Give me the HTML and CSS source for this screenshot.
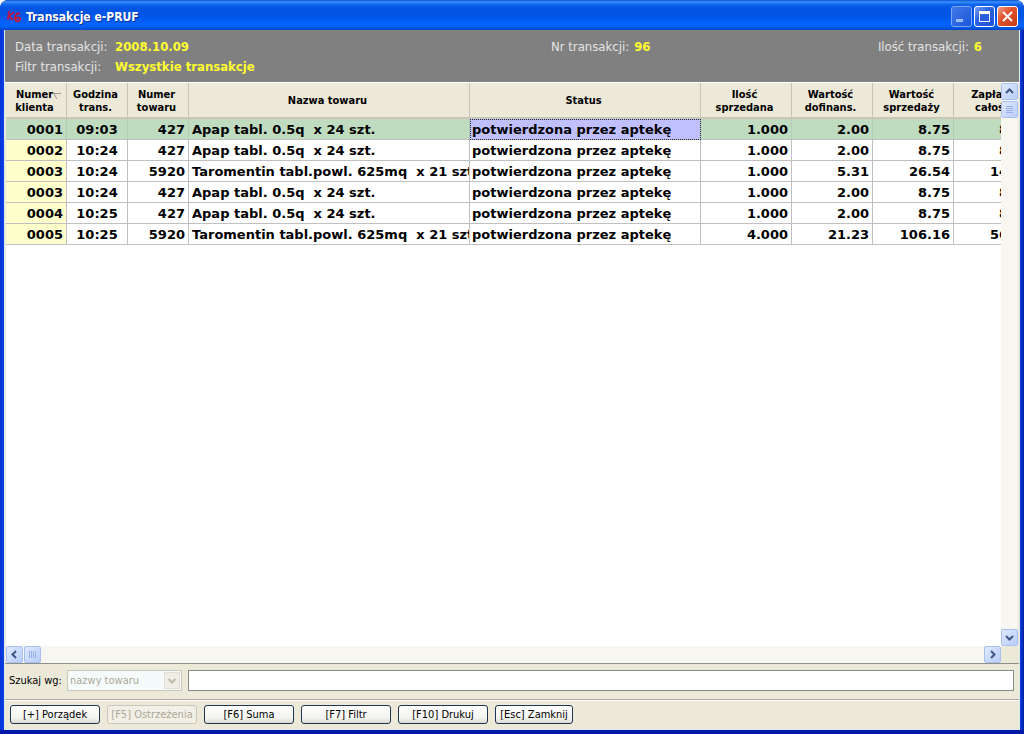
FILE: index.html
```html
<!DOCTYPE html>
<html lang="pl">
<head>
<meta charset="utf-8">
<meta name="viewport" content="width=device-width, initial-scale=1">
<title>Transakcje e-PRUF</title>
<link rel="stylesheet" href="styles.css">
</head>
<body>
<div class="window">
  <header class="titlebar">
    <svg class="app-icon" viewBox="0 0 16 16" aria-hidden="true">
      <path d="M3 2L2 11M8 3L3 7l4 4" fill="none" stroke="#b01c50" stroke-width="2"/>
      <path d="M14 5c-3-2-5 1-5 4 0 4 5 4 5 1 0-2-3-2-4 0" fill="none" stroke="#c4183c" stroke-width="2"/>
    </svg>
    <h1 class="title">Transakcje e-PRUF</h1>
    <div class="window-buttons">
      <button class="win-btn minimize" type="button" aria-label="Minimalizuj"><svg viewBox="0 0 19 19"><path d="M4 12h7v3H4z" fill="#9dbcf5"/></svg></button>
      <button class="win-btn" type="button" aria-label="Maksymalizuj"><svg viewBox="0 0 19 19"><path d="M4.500 5.500h10v9h-10z" fill="none" stroke="#fff"/><path d="M4 4h11v3H4z" fill="#fff"/></svg></button>
      <button class="win-btn close" type="button" aria-label="Zamknij"><svg viewBox="0 0 19 19"><path d="M5 5l9 9M14 5l-9 9" stroke="#fff" stroke-width="2"/></svg></button>
    </div>
  </header>

  <main class="client">
    <dl class="summary">
      <div class="fact fact-date"><dt>Data transakcji:</dt><dd>2008.10.09</dd></div>
      <div class="fact fact-number"><dt>Nr transakcji:</dt><dd>96</dd></div>
      <div class="fact fact-count"><dt>Ilość transakcji:</dt><dd>6</dd></div>
      <div class="fact fact-filter"><dt>Filtr transakcji:</dt><dd>Wszystkie transakcje</dd></div>
    </dl>

    <section class="grid-area">
      <div class="viewport">
        <table class="grid">
          <colgroup>
            <col class="c-client"><col class="c-time"><col class="c-item"><col class="c-name"><col class="c-status">
            <col class="c-qty"><col class="c-money"><col class="c-money"><col class="c-money">
          </colgroup>
          <thead>
            <tr>
              <th><span class="sorted">Numer<svg class="sort-mark" viewBox="0 0 8 8" aria-hidden="true"><path d="M0 1.500h8M1 2l3 5" fill="none" stroke="#9a978c"/></svg></span><br>klienta</th>
              <th>Godzina<br>trans.</th><th>Numer<br>towaru</th><th>Nazwa towaru</th><th>Status</th>
              <th>Ilość<br>sprzedana</th><th>Wartość<br>dofinans.</th><th>Wartość<br>sprzedaży</th><th>Zapłata<br>całość</th>
            </tr>
          </thead>
          <tbody>
            <tr class="current"><td>0001</td><td>09:03</td><td>427</td><td>Apap tabl. 0.5q&nbsp; x 24 szt.</td><td class="focused">potwierdzona przez aptekę</td><td>1.000</td><td>2.00</td><td>8.75</td><td>8.75</td></tr>
            <tr><td>0002</td><td>10:24</td><td>427</td><td>Apap tabl. 0.5q&nbsp; x 24 szt.</td><td>potwierdzona przez aptekę</td><td>1.000</td><td>2.00</td><td>8.75</td><td>8.75</td></tr>
            <tr><td>0003</td><td>10:24</td><td>5920</td><td>Taromentin tabl.powl. 625mq&nbsp; x 21 szt.</td><td>potwierdzona przez aptekę</td><td>1.000</td><td>5.31</td><td>26.54</td><td>14.23</td></tr>
            <tr><td>0003</td><td>10:24</td><td>427</td><td>Apap tabl. 0.5q&nbsp; x 24 szt.</td><td>potwierdzona przez aptekę</td><td>1.000</td><td>2.00</td><td>8.75</td><td>8.75</td></tr>
            <tr><td>0004</td><td>10:25</td><td>427</td><td>Apap tabl. 0.5q&nbsp; x 24 szt.</td><td>potwierdzona przez aptekę</td><td>1.000</td><td>2.00</td><td>8.75</td><td>8.75</td></tr>
            <tr><td>0005</td><td>10:25</td><td>5920</td><td>Taromentin tabl.powl. 625mq&nbsp; x 21 szt.</td><td>potwierdzona przez aptekę</td><td>4.000</td><td>21.23</td><td>106.16</td><td>56.92</td></tr>
          </tbody>
        </table>
      </div>
      <div class="scroll vertical">
        <button class="scroll-btn" type="button" aria-label="W górę"><svg viewBox="0 0 15 15"><path d="M4 9l3.500-3.500L11 9" fill="none" stroke="#405784" stroke-width="2"/></svg></button>
        <div class="thumb"><svg viewBox="0 0 15 15"><path d="M4 4.500h7M4 6.500h7M4 8.500h7M4 10.500h7" stroke="#95b0ec"/></svg></div>
        <button class="scroll-btn last" type="button" aria-label="W dół"><svg viewBox="0 0 15 15"><path d="M4 6l3.500 3.500L11 6" fill="none" stroke="#405784" stroke-width="2"/></svg></button>
      </div>
      <div class="scroll horizontal">
        <button class="scroll-btn" type="button" aria-label="W lewo"><svg viewBox="0 0 15 15"><path d="M9 4L5.500 7.500 9 11" fill="none" stroke="#405784" stroke-width="2"/></svg></button>
        <div class="thumb"><svg viewBox="0 0 15 15"><path d="M4.500 4v7M6.500 4v7M8.500 4v7M10.500 4v7" stroke="#95b0ec"/></svg></div>
        <button class="scroll-btn last" type="button" aria-label="W prawo"><svg viewBox="0 0 15 15"><path d="M6 4l3.500 3.500L6 11" fill="none" stroke="#405784" stroke-width="2"/></svg></button>
      </div>
    </section>

    <form class="search">
      <label for="field">Szukaj wg:</label>
      <span class="combo">
        <select id="field" disabled><option>nazwy towaru</option></select>
        <svg class="combo-arrow" viewBox="0 0 16 17" aria-hidden="true"><path d="M.5.5h15v16H.5z" fill="#f0ede6" stroke="#e2dfd4"/><path d="M4.500 7L8 10.500 11.500 7" fill="none" stroke="#bdb9a9" stroke-width="2"/></svg>
      </span>
      <input class="query" type="text" aria-label="Szukany tekst">
    </form>

    <div class="actions">
      <button class="action" type="button">[+] Porządek</button>
      <button class="action" type="button" disabled>[F5] Ostrzeżenia</button>
      <button class="action" type="button">[F6] Suma</button>
      <button class="action" type="button">[F7] Filtr</button>
      <button class="action" type="button">[F10] Drukuj</button>
      <button class="action narrow" type="button">[Esc] Zamknij</button>
    </div>
  </main>
</div>
</body>
</html>
```
FILE: styles.css
```css
* { box-sizing: border-box; }

body {
  margin: 0;
  background: #fff;
  color: #000;
  font: 11px/13px "DejaVu Sans Condensed", "Noto Sans", sans-serif;
}

button, input, select { font: inherit; }
svg { display: block; }

.window {
  display: flex;
  flex-direction: column;
  height: 100vh;
  padding: 0 4px 4px;
  border-radius: 8px 8px 0 0;
  background: linear-gradient(90deg, #0831d9, #0a3fe0 3px, #0a3fe0 calc(100% - 4px), #001ea0);
  box-shadow: inset 0 -4px 0 #0018a8;
  overflow: hidden;
}

/* Title bar */
.titlebar {
  display: flex;
  align-items: center;
  gap: 4px;
  height: 30px;
  flex: none;
  margin: 0 -4px;
  padding: 3px 6px 0 6px;
  border-radius: 8px 8px 0 0;
  background: linear-gradient(#0a4fd0 0, #3c93ff 2px, #1268ee 4px, #0355e2 8px, #0054e6 16px, #0262fb 23px, #0262fb 26px, #0148c8 30px);
}
.app-icon { width: 16px; height: 16px; }
.title {
  margin: 0;
  flex: 1;
  color: #fff;
  font: bold 12px/16px "DejaVu Sans Condensed", "Open Sans", sans-serif;
  text-shadow: 1px 1px 0 #0a2f9c;
}
.window-buttons { display: flex; gap: 2px; }
.win-btn {
  width: 21px;
  height: 21px;
  padding: 0;
  border: 1px solid #fff;
  border-radius: 3px;
  background: linear-gradient(135deg, #7ba2f5, #2a62e0 40%, #1c50d6);
}
.win-btn.minimize { border-color: #7ea6f2; background: linear-gradient(135deg, #3f78e8, #1c56da); }
.win-btn.close { background: linear-gradient(135deg, #f0a088, #e0532e 40%, #c53c14); }

.client {
  display: flex;
  flex-direction: column;
  flex: 1;
  min-height: 0;
  border: 1px solid #dfe6ee;
  border-top: 0;
  background: #ece9d8;
}

/* Summary */
.summary {
  display: grid;
  grid-template-columns: 536px 1fr auto;
  grid-template-rows: 20px 20px;
  margin: 0;
  padding: 7px 37px 5px 10px;
  background: #808080;
  color: #fff;
  font: 13px/20px "DejaVu Sans Condensed", sans-serif;
}
.fact { display: flex; gap: 5px; }
.fact dt { color: #e4e4e4; }
.fact-date dt, .fact-filter dt { width: 95px; }
.fact dd { margin: 0; color: #ffff30; font-weight: bold; }

/* Transactions grid */
.grid-area {
  display: grid;
  grid-template-columns: minmax(0, 1fr) 17px;
  grid-template-rows: minmax(0, 1fr) 17px;
  flex: 1;
  min-height: 0;
  padding: 0 1px;
  border-top: 1px solid #fff;
  border-bottom: 1px solid #8c9088;
}
.viewport { overflow: hidden; background: #fff; }
.grid {
  width: 1028px;
  table-layout: fixed;
  border-collapse: separate;
  border-spacing: 0;
}
.c-client { width: 61px; }
.c-time, .c-item { width: 61px; }
.c-name { width: 281px; }
.c-status { width: 231px; }
.c-qty { width: 91px; }
.c-money { width: 81px; }
.grid th {
  height: 36px;
  padding: 1px 3px 0 0;
  border-right: 1px solid #c7c5b2;
  border-bottom: 2px solid #cbc7b8;
  background: #ece9d8;
  font-weight: bold;
  text-align: center;
  white-space: nowrap;
}
.sorted { position: relative; }
.sort-mark { position: absolute; top: 4px; left: 100%; width: 8px; height: 8px; }
.grid td {
  height: 21px;
  padding: 1px 3px 0;
  border-right: 1px solid #c0c0c0;
  border-bottom: 1px solid #c0c0c0;
  font: bold 13px/19px "DejaVu Sans", sans-serif;
  text-align: right;
  white-space: nowrap;
  overflow: hidden;
}
.grid td:first-child { background: #ffffcc; }
.grid td:nth-child(2) { text-align: center; }
.grid td:nth-child(4) { text-align: left; }
.grid td:nth-child(5) { padding-left: 2px; text-align: left; }
.grid .current td { background: #c0dcc0; border-right-color: #b4ccb4; }
.grid .current .focused { background: #c0c0ff; outline: 1px dotted #202040; outline-offset: -1px; }

/* Scroll bars */
.scroll { display: flex; gap: 1px; background: #f7f6f1; }
.vertical { flex-direction: column; }
.scroll-btn, .thumb {
  width: 17px;
  height: 17px;
  flex: none;
  padding: 0;
  border: 1px solid #a9bff0;
  border-radius: 2px;
  background: linear-gradient(135deg, #dfe9ff, #b9cdf8);
}
.vertical .last { margin-top: auto; }
.horizontal .last { margin-left: auto; }

/* Search */
.search {
  display: flex;
  align-items: center;
  gap: 6px;
  padding: 6px 5px 8px 4px;
}
.search label { width: 52px; white-space: nowrap; }
.combo { position: relative; width: 115px; }
.combo select {
  display: block;
  width: 100%;
  height: 21px;
  padding: 0 0 0 2px;
  appearance: none;
  border: 1px solid #c9c7ba;
  border-radius: 0;
  background: #f5fbfa;
  color: #aca899;
  opacity: 1;
}
.combo-arrow { position: absolute; top: 2px; right: 2px; width: 16px; height: 17px; }
.query {
  flex: 1;
  min-width: 0;
  height: 21px;
  border: 1px solid #858b85;
  background: #fff;
}

/* Actions */
.actions {
  display: flex;
  gap: 7px;
  padding: 5px;
  border-top: 1px solid #aca899;
  box-shadow: inset 0 1px 0 #fff;
}
.action {
  width: 90px;
  height: 19px;
  padding: 0;
  border: 1px solid #1d3550;
  border-radius: 3px;
  background: linear-gradient(#fff, #f3f4f0 70%, #dcdbd2);
  color: #000;
  white-space: nowrap;
}
.action:disabled { border-color: #c9c7ba; background: #f2f0e6; color: #aca899; }
.action.narrow { width: 78px; }
```
